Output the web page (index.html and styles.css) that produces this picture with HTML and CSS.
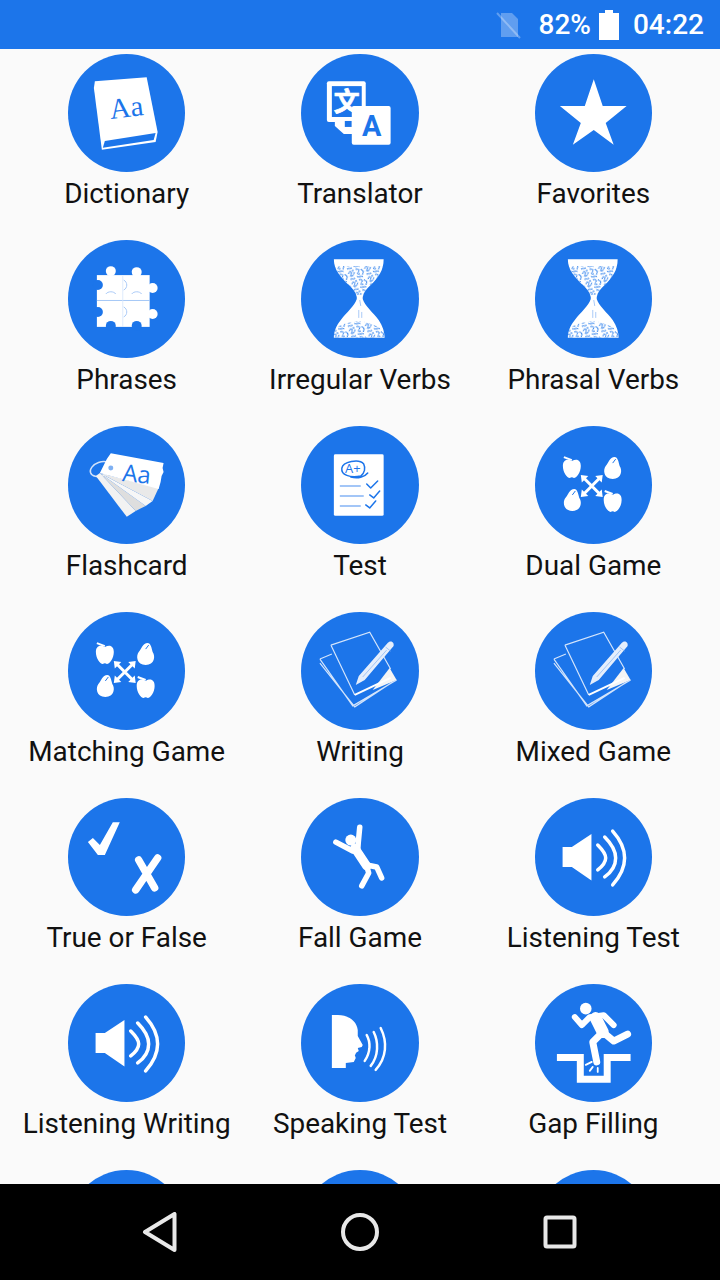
FILE: index.html
```html
<!DOCTYPE html>
<html lang="en">
<head>
<meta charset="utf-8">
<title>Dictionary menu</title>
<link rel="stylesheet" href="styles.css">
</head>
<body>
<svg class="sprite" aria-hidden="true">
  <defs>
    <pattern id="sand" width="17" height="11" patternUnits="userSpaceOnUse" patternTransform="rotate(-18)">
      <path class="sand-line" d="M1 3C2 0 5 1 4 3S1 6 3 6 6 5 7 3M9 1C12 0 13 3 11 4S9 7 12 6M14 2 16 5 14 8M1 9C3 8 4 10 6 9M8 8C10 10 12 8 14 10M6 0V2"/>
    </pattern>
    <clipPath id="glass-top"><path d="M33 19H83C83 30 78 37 70 45 66 49 63 52 62 57H56C55 52 52 49 48 45 40 37 33 30 33 19Z"/></clipPath>
    <clipPath id="glass-bottom"><path d="M56 59H62C64 66 72 72 78 80 82 86 84 92 84 98H33C33 92 35 86 40 80 46 72 54 66 56 59Z"/></clipPath>
  </defs>

  <symbol id="i-book" viewBox="0 0 118 118">
    <path class="w" d="M27 27 79 23 90 78 88 88 34 96 26 34Z"/>
    <path class="b" d="M37 87 88 79 86 86 35 94Z"/>
  </symbol>

  <symbol id="i-translate" viewBox="0 0 118 118">
    <rect class="w" x="26" y="27" width="39" height="41" rx="2"/>
    <rect class="b" x="31" y="32" width="30" height="31"/>
    <path class="w" d="M34 68H52V80H43L34 72Z"/>
    <rect class="b" x="44" y="67" width="7" height="6"/>
  </symbol>

  <symbol id="i-star" viewBox="0 0 118 118">
    <path class="w" d="M59 25 68 52 92 52 71 69 79 91 59 76 38 91 46 69 25 52 50 52Z"/>
  </symbol>

  <symbol id="i-puzzle" viewBox="0 0 118 118">
    <rect class="w" x="29" y="35" width="53" height="52"/>
    <circle class="w" cx="43" cy="31" r="5"/>
    <circle class="w" cx="69" cy="32" r="5"/>
    <circle class="w" cx="85" cy="48" r="5"/>
    <circle class="w" cx="85" cy="74" r="5"/>
    <circle class="b" cx="30" cy="45" r="5"/>
    <circle class="b" cx="30" cy="72" r="5"/>
    <circle class="b" cx="43" cy="86" r="5"/>
    <circle class="b" cx="69" cy="86" r="5"/>
    <path class="seam" d="M29 60.500H82"/>
    <path class="seam-faint" d="M55 36V87"/>
    <path class="seam-soft" d="M38 54C40 51 46 51 48 54M64 54C66 51 72 51 74 54M56 40C60 42 60 48 56 50M56 67C60 69 60 75 56 77"/>
  </symbol>

  <symbol id="i-glass" viewBox="0 0 118 118">
    <path class="w" d="M33 19H83C83 30 78 37 70 45 66 49 63 52 62 57V59C64 66 72 72 78 80 82 86 84 92 84 98H33C33 92 35 86 40 80 46 72 54 66 56 59V57C55 52 52 49 48 45 40 37 33 30 33 19Z"/>
    <g clip-path="url(#glass-top)"><rect class="sand" x="30" y="26" width="58" height="29"/></g>
    <g clip-path="url(#glass-bottom)"><path class="sand" d="M30 99V90C40 84 50 82 58 81 68 82 76 86 88 92V99Z"/></g>
    <path class="seam-soft" d="M59 60 60 66M58 70 58 78M61 72 61 78"/>
  </symbol>

  <symbol id="i-cards" viewBox="0 0 118 118">
    <ellipse class="ring" cx="33" cy="43" rx="11" ry="7" transform="rotate(-20 33 43)"/>
    <path class="f2" d="M32 47 68 85 59 91 28 50Z"/>
    <path class="fd" d="M32 47 78 80 68 85Z"/>
    <path class="f7" d="M32 47 85 75 78 80Z"/>
    <path class="fe" d="M32 47 91 62 85 75Z"/>
    <path class="w" d="M39 33 43 27 96 37 95 42 96 46 94 50 93 56 91 63 32 47Z"/>
    <circle class="hole" cx="43" cy="42" r="2.500"/>
  </symbol>

  <symbol id="i-test" viewBox="0 0 118 118">
    <rect class="w" x="33" y="28" width="50" height="62" rx="1.500"/>
    <path class="mark" d="M60 50C49 52 40 49 41 42 42 36 58 32 63 38 65 42 64 47 60 50M50 51C57 53 64 51 67 47"/>
    <path class="rule" d="M39 60H60M39 70H63M39 80H60"/>
    <path class="mark" d="M66 58 70 62 77 55M69 69 73 72 79 65M65 79 69 82 75 75"/>
  </symbol>

  <symbol id="i-match" viewBox="0 0 118 118">
    <g transform="translate(37 42)"><path class="w" d="M0-7C5-10 9-8 9-2 9 4 5 10 2 10 1 9-1 9-2 10-5 10-9 4-9-2-9-8-5-10 0-7Z"/><path class="leaf" d="M-8-11 0-8"/></g>
    <g transform="translate(78 43)"><path class="w" d="M2-12C5-12 6-7 7-3 10 1 9 10 0 10-9 10-10 1-7-3-4-6-3-12 2-12Z"/><path class="cut" d="M0-6 3-10"/></g>
    <g transform="translate(37.500 75)"><path class="w" d="M2-12C5-12 6-7 7-3 10 1 9 10 0 10-9 10-10 1-7-3-4-6-3-12 2-12Z"/><path class="cut" d="M0-6 3-10"/></g>
    <g transform="translate(78 76)"><path class="w" d="M0-7C5-10 9-8 9-2 9 4 5 10 2 10 1 9-1 9-2 10-5 10-9 4-9-2-9-8-5-10 0-7Z"/><path class="leaf" d="M-8-11 0-8"/></g>
    <path class="cross" d="M48 51 66 69M66 51 48 69"/>
    <path class="w" d="M46 49 53.500 50 47 56.500ZM68 49 60.500 50 67 56.500ZM46 71 53.500 70 47 63.500ZM68 71 60.500 70 67 63.500Z"/>
  </symbol>

  <symbol id="i-write" viewBox="0 0 118 118">
    <path class="f5" d="M89 56 96 68 72 78Z"/>
    <path class="sheet" d="M30 33 69 20 90 57M30 33 54 83M19 47 31 42M19 47 52 94 96 68M19 51 54 95 92 70"/>
    <path class="edge" d="M54 83 90 66"/>
    <path class="pen" d="M55 73 58 64 87 31C89 28 94 29 93 34L64 68Z"/>
    <path class="pen-line" d="M85 35 90 39M62 65 86 38"/>
  </symbol>

  <symbol id="i-truefalse" viewBox="0 0 118 118">
    <path class="w" d="M20 44 25 40 32 47 45 24 52 24 37 57 30 57Z"/>
    <path class="xmark" d="M71 62 87 90M90 60 68 92"/>
  </symbol>

  <symbol id="i-fall" viewBox="0 0 118 118">
    <circle class="w" cx="50" cy="42" r="5.500"/>
    <path class="limb" d="M59 29 57.500 45 57 52M35 44 52 53M66 67 76 69 81 80M66 68 68 75 61 88"/>
    <path class="torso" d="M54 50 66 68"/>
  </symbol>

  <symbol id="i-speaker" viewBox="0 0 118 118">
    <path class="w" d="M27.700 49H37L56.700 36V82.700L37 69H27.700Z"/>
    <path class="wave" d="M63 47C68 52 71 56 71 60 71 64 68 68 63 72M70 39C77 46 81 53 81 60 81 67 77 74 70 79M78 33C86 42 90 51 90 60 90 69 86 78 78 87"/>
  </symbol>

  <symbol id="i-speak" viewBox="0 0 118 118">
    <path class="w" d="M31 31H37C48 31 56 37 57 46L57 52 62 61 61 63 57 64 58 67 55 69 55 70 54 71 55 74 53 78 45 79V84H31Z"/>
    <path class="wave-thin" d="M66 51C70 58 70 68 64 77M73 48C78 58 78 72 70 82M80 44C87 58 86 74 75 86"/>
  </symbol>

  <symbol id="i-gap" viewBox="0 0 118 118">
    <circle class="w" cx="51" cy="24.500" r="5.800"/>
    <path class="arm-bold" d="M40 33 47 41 55 33 69 31 79 41"/>
    <path class="leg-bold" d="M68 48 79 57 93 50M68 48 58 58 62 78"/>
    <path class="torso-bold" d="M61 34 68 48"/>
    <path class="ground" d="M22 73.500H45.500V95.500H72.500V73.500H96"/>
    <path class="spark" d="M51 81 57 78M55 87 58 83M63 84 63 88"/>
  </symbol>
</svg>

<div class="phone">
  <header class="status">
    <svg class="sim" viewBox="0 0 26 28"><path class="sim-body" d="M6 2H17L23 8V26H6Z"/><path class="sim-slash" d="M2 2 25 27"/></svg>
    <span class="status-text">82%</span>
    <svg class="battery" viewBox="0 0 20 30"><path d="M6 0H14V3H20V30H0V3H6Z"/></svg>
    <span class="status-text status-time">04:22</span>
  </header>

  <main class="menu">
    <div class="grid">
      <a class="cell"><svg class="disc" viewBox="0 0 118 118"><use href="#i-book"/><text class="t-book" transform="translate(43 65) rotate(-7)">Aa</text></svg><span class="label">Dictionary</span></a>
      <a class="cell"><svg class="disc" viewBox="0 0 118 118"><use href="#i-translate"/><text class="t-wen" x="46" y="57">文</text><rect class="w" x="51" y="52" width="39" height="39" rx="2"/><text class="t-a" x="71" y="82">A</text></svg><span class="label">Translator</span></a>
      <a class="cell"><svg class="disc"><use href="#i-star"/></svg><span class="label">Favorites</span></a>
      <a class="cell"><svg class="disc"><use href="#i-puzzle"/></svg><span class="label">Phrases</span></a>
      <a class="cell"><svg class="disc"><use href="#i-glass"/></svg><span class="label">Irregular Verbs</span></a>
      <a class="cell"><svg class="disc"><use href="#i-glass"/></svg><span class="label">Phrasal Verbs</span></a>
      <a class="cell"><svg class="disc" viewBox="0 0 118 118"><use href="#i-cards"/><text class="t-cards" transform="translate(54 55) rotate(6)">Aa</text></svg><span class="label">Flashcard</span></a>
      <a class="cell"><svg class="disc" viewBox="0 0 118 118"><use href="#i-test"/><text class="t-grade" x="52" y="47">A+</text></svg><span class="label">Test</span></a>
      <a class="cell"><svg class="disc"><use href="#i-match"/></svg><span class="label">Dual Game</span></a>
      <a class="cell"><svg class="disc"><use href="#i-match"/></svg><span class="label">Matching Game</span></a>
      <a class="cell"><svg class="disc"><use href="#i-write"/></svg><span class="label">Writing</span></a>
      <a class="cell"><svg class="disc"><use href="#i-write"/></svg><span class="label">Mixed Game</span></a>
      <a class="cell"><svg class="disc"><use href="#i-truefalse"/></svg><span class="label">True or False</span></a>
      <a class="cell"><svg class="disc"><use href="#i-fall"/></svg><span class="label">Fall Game</span></a>
      <a class="cell"><svg class="disc"><use href="#i-speaker"/></svg><span class="label">Listening Test</span></a>
      <a class="cell"><svg class="disc"><use href="#i-speaker"/></svg><span class="label">Listening Writing</span></a>
      <a class="cell"><svg class="disc"><use href="#i-speak"/></svg><span class="label">Speaking Test</span></a>
      <a class="cell"><svg class="disc"><use href="#i-gap"/></svg><span class="label">Gap Filling</span></a>
      <a class="cell"><svg class="disc"></svg></a>
      <a class="cell"><svg class="disc"></svg></a>
      <a class="cell"><svg class="disc"></svg></a>
    </div>
  </main>

  <nav class="navbar">
    <svg class="nav-icon" viewBox="0 0 40 40"><path d="M34.500 2V38L5 20Z"/></svg>
    <svg class="nav-icon" viewBox="0 0 40 40"><circle cx="20" cy="20" r="17"/></svg>
    <svg class="nav-icon" viewBox="0 0 40 40"><rect x="5.500" y="5.500" width="29" height="29" rx="1.500"/></svg>
  </nav>
</div>
</body>
</html>
```

FILE: styles.css
```css
* { box-sizing: border-box; }
html, body { margin: 0; padding: 0; }
body { width: 720px; height: 1280px; overflow: hidden; font-family: Roboto, "Noto Sans", sans-serif; }

.sprite { display: block; width: 0; height: 0; overflow: hidden; }

.phone { display: flex; flex-direction: column; width: 720px; height: 1280px; background: #fafafa; }

.status { flex: 0 0 49px; display: flex; align-items: center; justify-content: flex-end; padding-right: 16px; background: #1c75ea; color: #fff; }
.status-text { font-size: 28px; font-weight: 500; line-height: 49px; }
.status-time { margin-left: 14px; }
.sim { width: 26px; height: 28px; margin-right: 18px; }
.sim-body { fill: #fff; opacity: .3; }
.sim-slash { stroke: #fff; stroke-width: 2; opacity: .3; fill: none; }
.battery { width: 20px; height: 30px; margin-left: 8px; fill: #fff; }

.menu { flex: 1 1 0; min-height: 0; overflow: hidden; padding: 5px 10px 0; }
.grid { display: grid; grid-template-columns: repeat(3, 1fr); grid-auto-rows: 186px; }
.cell { display: flex; flex-direction: column; align-items: center; }
.disc { flex: none; display: block; width: 117.500px; height: 118px; border-radius: 50%; background: #1c75ea; }
.label { margin-top: 7px; font-size: 27.900px; line-height: 30px; color: #111; white-space: nowrap; }

.navbar { flex: 0 0 96px; display: flex; justify-content: center; align-items: center; background: #000; }
.nav-icon { width: 40px; height: 40px; margin: 0 80px; fill: none; stroke: #e8e8e8; stroke-width: 4; stroke-linejoin: round; }

.w { fill: #fff; }
.b { fill: #1c75ea; }
.f5 { fill: #f5f5f5; }
.f2 { fill: #f2f2f2; }
.f7 { fill: #f7f7f7; }
.fd { fill: #dedede; }
.fe { fill: #e9e9e9; }
.hole { fill: #7fb0f2; }
.ring { fill: none; stroke: #d2e2f9; stroke-width: 1.500; }

.t-book { font-family: "Liberation Serif", serif; font-size: 29px; fill: #1c75ea; }
.t-wen { font-family: "Noto Sans CJK SC", sans-serif; font-size: 26px; font-weight: 700; fill: #fff; stroke: #fff; stroke-width: .7; text-anchor: middle; }
.t-a { font-family: Roboto, sans-serif; font-size: 29px; font-weight: 700; fill: #1c75ea; text-anchor: middle; }
.t-cards { font-family: "Open Sans", sans-serif; font-size: 24px; fill: #1c75ea; }
.t-grade { font-family: "Open Sans", sans-serif; font-size: 13px; fill: #1c75ea; text-anchor: middle; }

.seam { fill: none; stroke: #8fbaf4; stroke-width: .8; }
.seam-faint { fill: none; stroke: #d6e6fc; stroke-width: .8; }
.seam-soft { fill: none; stroke: #a9caf7; stroke-width: 1; }
.sand { fill: url(#sand); }
.sand-line { fill: none; stroke: #1c75ea; stroke-width: 1; }

.mark { fill: none; stroke: #1c75ea; stroke-width: 1.500; stroke-linecap: round; stroke-linejoin: round; }
.rule { fill: none; stroke: #a3c6f7; stroke-width: 2; }
.leaf { fill: none; stroke: #fff; stroke-width: 2; }
.cut { fill: none; stroke: #1c75ea; stroke-width: 1; }
.cross { fill: none; stroke: #fff; stroke-width: 3; }

.sheet { fill: none; stroke: #d3e4fb; stroke-width: 1.200; }
.edge { fill: none; stroke: #fff; stroke-width: 2; }
.pen { fill: #e4eefc; }
.pen-line { fill: none; stroke: #8fbaf4; stroke-width: .8; }

.xmark { fill: none; stroke: #fff; stroke-width: 7.500; stroke-linecap: round; }
.limb { fill: none; stroke: #fff; stroke-width: 5.500; stroke-linecap: round; stroke-linejoin: round; }
.torso { fill: none; stroke: #fff; stroke-width: 9; stroke-linecap: round; }
.wave { fill: none; stroke: #fff; stroke-width: 3.500; stroke-linecap: round; }
.wave-thin { fill: none; stroke: #fff; stroke-width: 2.500; stroke-linecap: round; }
.arm-bold { fill: none; stroke: #fff; stroke-width: 6; stroke-linecap: round; stroke-linejoin: round; }
.leg-bold { fill: none; stroke: #fff; stroke-width: 7; stroke-linecap: round; stroke-linejoin: round; }
.torso-bold { fill: none; stroke: #fff; stroke-width: 12; stroke-linecap: round; }
.ground { fill: none; stroke: #fff; stroke-width: 7; }
.spark { fill: none; stroke: #fff; stroke-width: 1.800; stroke-linecap: round; }
```
